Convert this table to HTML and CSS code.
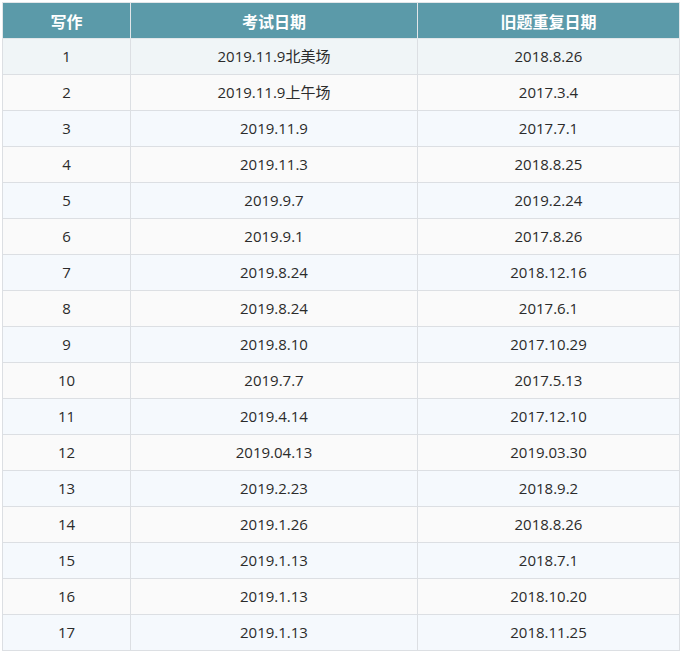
FILE: index.html
```html
<!DOCTYPE html>
<html lang="zh">
<head>
<meta charset="utf-8">
<link rel="stylesheet" href="styles.css">
</head>
<body>
<table class="exam">
  <colgroup><col class="c1"><col class="c2"><col class="c3"></colgroup>
  <thead>
    <tr><th>写作</th><th>考试日期</th><th>旧题重复日期</th></tr>
  </thead>
  <tbody>
    <tr class="first"><td>1</td><td>2019.11.9北美场</td><td>2018.8.26</td></tr>
    <tr><td>2</td><td>2019.11.9上午场</td><td>2017.3.4</td></tr>
    <tr><td>3</td><td>2019.11.9</td><td>2017.7.1</td></tr>
    <tr><td>4</td><td>2019.11.3</td><td>2018.8.25</td></tr>
    <tr><td>5</td><td>2019.9.7</td><td>2019.2.24</td></tr>
    <tr><td>6</td><td>2019.9.1</td><td>2017.8.26</td></tr>
    <tr><td>7</td><td>2019.8.24</td><td>2018.12.16</td></tr>
    <tr><td>8</td><td>2019.8.24</td><td>2017.6.1</td></tr>
    <tr><td>9</td><td>2019.8.10</td><td>2017.10.29</td></tr>
    <tr><td>10</td><td>2019.7.7</td><td>2017.5.13</td></tr>
    <tr><td>11</td><td>2019.4.14</td><td>2017.12.10</td></tr>
    <tr><td>12</td><td>2019.04.13</td><td>2019.03.30</td></tr>
    <tr><td>13</td><td>2019.2.23</td><td>2018.9.2</td></tr>
    <tr><td>14</td><td>2019.1.26</td><td>2018.8.26</td></tr>
    <tr><td>15</td><td>2019.1.13</td><td>2018.7.1</td></tr>
    <tr><td>16</td><td>2019.1.13</td><td>2018.10.20</td></tr>
    <tr><td>17</td><td>2019.1.13</td><td>2018.11.25</td></tr>
  </tbody>
</table>
</body>
</html>
```
FILE: styles.css
```css
html, body {
  margin: 0;
  padding: 0;
  background: #ffffff;
}
body {
  padding: 2px 0 0 2px;
  font-family: "Open Sans", "Noto Sans CJK SC", sans-serif;
  color: #2b2b2b;
}
.exam {
  border-collapse: collapse;
  table-layout: fixed;
  width: 677px;
  font-size: 15px;
}
.c1 { width: 128px; }
.c2 { width: 287px; }
.c3 { width: 262px; }
.exam th {
  background: #5b9aa9;
  color: #ffffff;
  font-weight: bold;
  font-size: 16px;
  height: 35px;
  padding: 0;
  border: 1px solid #e2e6e9;
  text-align: center;
  font-family: "Noto Sans CJK SC", sans-serif;
}
.exam td {
  height: 34px;
  padding: 0 0 1px 0;
  border: 1px solid #dcdfe3;
  text-align: center;
  vertical-align: middle;
  background: #f5f9fd;
  line-height: 20px;
}
.exam tbody tr:nth-child(even) td {
  background: #fafafa;
}
.exam tbody tr.first td {
  background: #f0f5f7;
}
```
